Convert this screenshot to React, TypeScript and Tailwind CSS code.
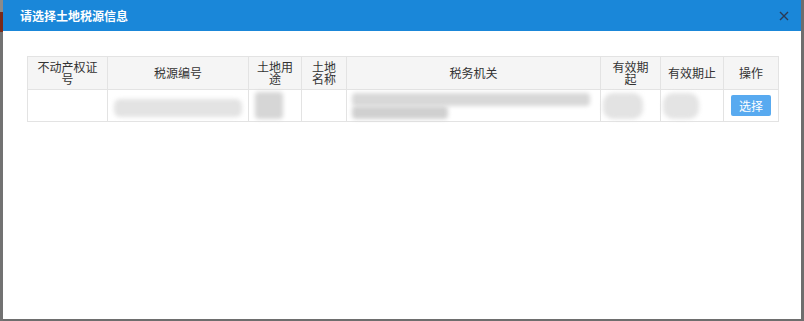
import React from "react";

const cols = [
  { label: "不动产权证号", w: 80 },
  { label: "税源编号", w: 141 },
  { label: "土地用途", w: 53 },
  { label: "土地名称", w: 45 },
  { label: "税务机关", w: 254 },
  { label: "有效期起", w: 60 },
  { label: "有效期止", w: 63 },
  { label: "操作", w: 55 },
];

function Blur({ className }: { className: string }) {
  return <div className={"blur-[2px] " + className} />;
}

export default function App() {
  return (
    <div
      className="flex h-[321px] w-[804px] bg-[#6e6e6e]"
      style={{ fontFamily: '"Noto Sans CJK SC", "Noto Sans", sans-serif' }}
    >
      <div className="flex w-[3px] flex-col">
        <div className="h-[12px] bg-[#8a8a8a]" />
        <div className="h-[20px] bg-[#7a2a1a]" />
        <div className="flex-1 bg-[#727272]" />
      </div>
      <div className="mb-[2px] flex w-[798px] flex-col bg-white">
        <div className="flex h-[31px] items-center justify-between bg-[#1a87d9] pl-[17px] pr-[12px]">
          <span className="text-[12px] font-bold text-white">请选择土地税源信息</span>
          <svg width="10" height="10" viewBox="0 0 10 10" className="mt-[1px]">
            <path d="M1 1L9 9M9 1L1 9" stroke="#2b3a55" strokeWidth="1.4" />
          </svg>
        </div>
        <div className="pl-[24px] pt-[25px]">
          <table className="table-fixed border-collapse text-[12px] text-[#333]">
            <colgroup>
              {cols.map((c) => (
                <col key={c.label} style={{ width: c.w }} />
              ))}
            </colgroup>
            <thead>
              <tr className="h-[33px] bg-[#f5f5f5]">
                {cols.map((c) => (
                  <th
                    key={c.label}
                    className="border border-[#e3e3e3] px-[7px] text-center align-middle text-[12px] font-normal leading-[12px]"
                  >
                    {c.label}
                  </th>
                ))}
              </tr>
            </thead>
            <tbody>
              <tr className="h-[32px]">
                <td className="border border-[#e3e3e3]" />
                <td className="border border-[#e3e3e3] px-[4px]">
                  <Blur className="ml-[2px] mt-[4px] h-[18px] w-[128px] rounded-[6px] bg-[#e3e3e3]" />
                </td>
                <td className="border border-[#e3e3e3]">
                  <Blur className="ml-[6px] h-[27px] w-[28px] rounded-[4px] bg-[#d6d6d6]" />
                </td>
                <td className="border border-[#e3e3e3]" />
                <td className="border border-[#e3e3e3] px-[5px]">
                  <div className="flex flex-col">
                    <Blur className="h-[13px] w-[238px] rounded-[4px] bg-[#d8d8d8]" />
                    <Blur className="h-[13px] w-[96px] rounded-[4px] bg-[#d0d0d0]" />
                  </div>
                </td>
                <td className="border border-[#e3e3e3]">
                  <Blur className="ml-[2px] h-[26px] w-[40px] rounded-[10px] bg-[#e3e3e3]" />
                </td>
                <td className="border border-[#e3e3e3]">
                  <Blur className="ml-[2px] h-[26px] w-[36px] rounded-[10px] bg-[#e4e4e4]" />
                </td>
                <td className="border border-[#e3e3e3] text-center">
                  <button className="h-[21px] w-[40px] rounded-[2px] bg-[#58aaf0] text-[12px] leading-[21px] text-white">
                    选择
                  </button>
                </td>
              </tr>
            </tbody>
          </table>
        </div>
      </div>
      <div className="flex-1 bg-[#6e6e6e]" />
    </div>
  );
}
